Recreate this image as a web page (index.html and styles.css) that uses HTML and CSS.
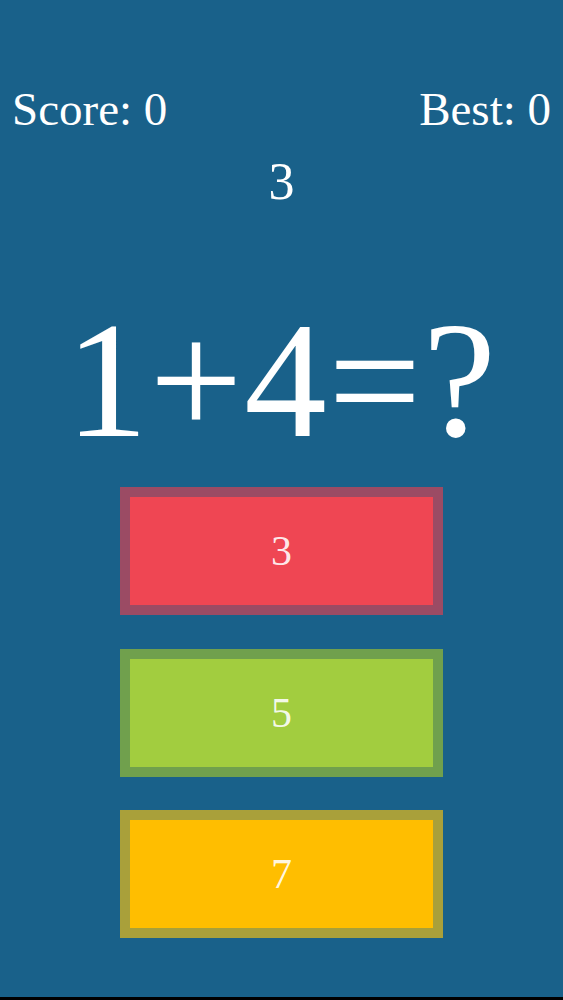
FILE: index.html
```html
<!DOCTYPE html>
<html>
<head>
<meta charset="utf-8">
<link rel="stylesheet" href="styles.css">
</head>
<body>
<div class="app">
  <div class="scores">
    <div class="score">Score: 0</div>
    <div class="score">Best: 0</div>
  </div>
  <div class="timer">3</div>
  <div class="question">1+4=?</div>
  <div class="answers">
    <div class="answer red">3</div>
    <div class="answer green">5</div>
    <div class="answer yellow">7</div>
  </div>
</div>
</body>
</html>
```

FILE: styles.css
```css
html {
  background: #000;
}
body {
  margin: 0;
  font-family: "Liberation Serif", "Times New Roman", serif;
  color: #fff;
}
.app {
  height: 997px;
  background: #19618a;
  display: flex;
  flex-direction: column;
  align-items: center;
  overflow: hidden;
}
.scores {
  align-self: stretch;
  display: flex;
  justify-content: space-between;
  padding: 0 12px 0 12px;
  margin-top: 86px;
}
.score {
  font-size: 47px;
  line-height: 47px;
}
.timer {
  margin-top: 23px;
  font-size: 52px;
  line-height: 52px;
}
.question {
  margin-top: 90px;
  font-size: 165px;
  line-height: 165px;
  letter-spacing: 1.5px;
}
.answers {
  margin-top: 24px;
  display: flex;
  flex-direction: column;
  gap: 33.5px;
}
.answer {
  box-sizing: border-box;
  width: 323px;
  height: 128px;
  border: 10px solid;
  display: flex;
  align-items: center;
  justify-content: center;
  font-size: 42px;
  color: rgba(255, 255, 255, 0.9);
}
.red {
  background: #ef4653;
  border-color: #9b4b64;
}
.green {
  background: #a2cd3f;
  border-color: #70a04d;
}
.yellow {
  background: #ffbe00;
  border-color: #a9a03a;
}
```
